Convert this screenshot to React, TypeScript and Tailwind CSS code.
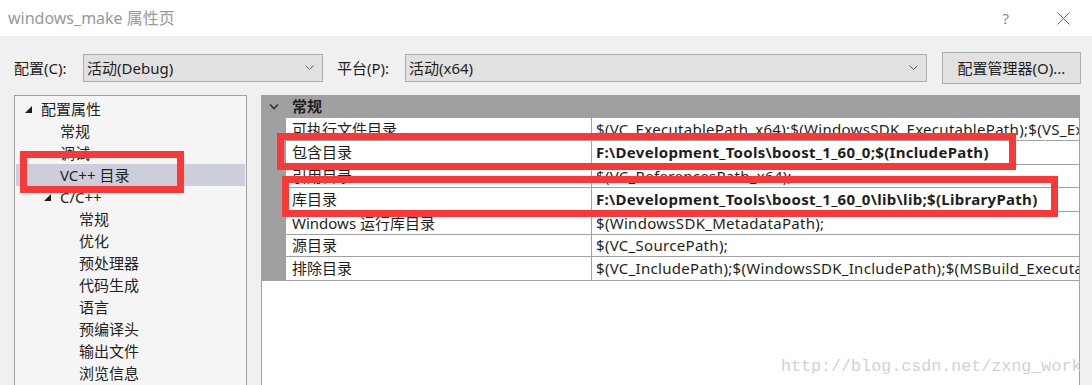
const font = { fontFamily: '"Noto Sans", "Noto Sans CJK SC", sans-serif' };

const tree = [
  { label: "配置属性", indent: "pl-[9px]", arrow: true },
  { label: "常规", indent: "pl-[44px]" },
  { label: "调试", indent: "pl-[44px]" },
  { label: "VC++ 目录", indent: "pl-[44px]", selected: true },
  { label: "C/C++", indent: "pl-[28px]", arrow: true },
  { label: "常规", indent: "pl-[63px]" },
  { label: "优化", indent: "pl-[63px]" },
  { label: "预处理器", indent: "pl-[63px]" },
  { label: "代码生成", indent: "pl-[63px]" },
  { label: "语言", indent: "pl-[63px]" },
  { label: "预编译头", indent: "pl-[63px]" },
  { label: "输出文件", indent: "pl-[63px]" },
  { label: "浏览信息", indent: "pl-[63px]" },
];

const rows = [
  { name: "可执行文件目录", value: "$(VC_ExecutablePath_x64);$(WindowsSDK_ExecutablePath);$(VS_ExecutablePath);$(MSBuild_ExecutablePath)", h: "h-[23px]" },
  { name: "包含目录", value: "F:\\Development_Tools\\boost_1_60_0;$(IncludePath)", bold: true, h: "h-[24px]" },
  { name: "引用目录", value: "$(VC_ReferencesPath_x64);", h: "h-[23px]" },
  { name: "库目录", value: "F:\\Development_Tools\\boost_1_60_0\\lib\\lib;$(LibraryPath)", bold: true, h: "h-[24px]" },
  { name: "Windows 运行库目录", value: "$(WindowsSDK_MetadataPath);", h: "h-[23px]" },
  { name: "源目录", value: "$(VC_SourcePath);", h: "h-[22px]" },
  { name: "排除目录", value: "$(VC_IncludePath);$(WindowsSDK_IncludePath);$(MSBuild_ExecutablePath);$(VC_LibraryPath_x64)", h: "h-[24px]" },
];

const Chevron = () => (
  <svg width="9" height="6" viewBox="0 0 9 6" className="text-[#606060]">
    <polyline points="0.5,0.5 4.5,4.5 8.5,0.5" fill="none" stroke="currentColor" strokeWidth="1" />
  </svg>
);

const Tri = () => (
  <svg width="7" height="7" viewBox="0 0 7 7" className="mr-[9px] shrink-0">
    <polygon points="7,0 7,7 0,7" fill="#1e1e1e" />
  </svg>
);

const App = (): JSX.Element => {
  return (
    <div className="relative w-[1092px] h-[385px] overflow-hidden bg-[#f0f0f0] text-[#1e1e1e]" style={font}>
      {/* title bar */}
      <div className="h-[36px] bg-white flex items-center pl-[8px] pr-[22px]">
        <span className="text-[16px] text-[#999999]">windows_make 属性页</span>
        <span className="ml-auto text-[15px] text-[#8a8a8a]">?</span>
        <svg width="13" height="13" viewBox="0 0 13 13" className="ml-[48px]">
          <path d="M0.5 0.5 L12.5 12.5 M12.5 0.5 L0.5 12.5" stroke="#707070" strokeWidth="1" />
        </svg>
      </div>

      {/* configuration row */}
      <div className="flex items-center h-[32px] mt-[16px] pl-[14px] text-[15px]">
        <span className="w-[69px]">配置(C):</span>
        <div className="w-[240px] h-[28px] bg-[#e1e1e1] border border-[#adadad] flex items-center pl-[3px] pr-[8px]">
          <span>活动(Debug)</span>
          <span className="ml-auto"><Chevron /></span>
        </div>
        <span className="ml-[14px] w-[68px]">平台(P):</span>
        <div className="w-[522px] h-[28px] bg-[#e1e1e1] border border-[#adadad] flex items-center pl-[3px] pr-[8px]">
          <span>活动(x64)</span>
          <span className="ml-auto"><Chevron /></span>
        </div>
        <div className="ml-[15px] w-[139px] h-[32px] bg-[#e1e1e1] border border-[#adadad] flex items-center justify-center">
          配置管理器(O)...
        </div>
      </div>

      {/* panels */}
      <div className="flex mt-[11px] pl-[14px] gap-[14px] h-[300px]">
        <div className="w-[233px] h-full border border-[#a0a0a0] bg-[#f5f5f5] pt-[2px] px-[1px] text-[15px]">
          {tree.map((t, i) => (
            <div
              key={i}
              className={`h-[22px] flex items-center ${t.indent} ${t.selected ? "bg-[#cccedb]" : ""}`}
            >
              {t.arrow && <Tri />}
              <span>{t.label}</span>
            </div>
          ))}
        </div>

        <div className="w-[819px] h-full border-x border-[#a0a0a0] bg-white text-[15px]">
          <div className="h-[23px] bg-[#a0a0a0] flex items-center">
            <span className="w-[24px] flex justify-center">
              <svg width="10" height="6" viewBox="0 0 10 6">
                <polyline points="1,0.5 5,4.5 9,0.5" fill="none" stroke="#333333" strokeWidth="1.6" />
              </svg>
            </span>
            <span className="pl-[6px] font-bold">常规</span>
          </div>
          {rows.map((r, i) => (
            <div key={i} className={`flex ${r.h}`}>
              <div className="w-[24px] bg-[#a0a0a0] shrink-0" />
              <div className="w-[306px] shrink-0 border-r border-b border-[#a0a0a0] flex items-center pl-[6px] whitespace-nowrap">
                {r.name}
              </div>
              <div className={`flex-1 min-w-0 border-b border-[#a0a0a0] flex items-center pl-[4px] whitespace-nowrap overflow-hidden tracking-[0.3px] ${r.bold ? "font-bold" : ""}`}>
                {r.value}
              </div>
            </div>
          ))}
        </div>
      </div>

      {/* red annotation boxes */}
      <div className="absolute left-[20px] top-[151px] w-[164px] h-[42px] border-[7px] border-[#fa3838]" />
      <div className="absolute left-[277px] top-[133px] w-[739px] h-[37px] border-[7px] border-[#fa3838]" />
      <div className="absolute left-[282px] top-[176px] w-[776px] h-[41px] border-[7px] border-[#fa3838]" />

      {/* watermark */}
      <div
        className="absolute left-[781px] top-[354px] text-[16.7px] text-[#d2d2d2]"
        style={{ fontFamily: '"Liberation Mono", monospace' }}
      >
        http://blog.csdn.net/zxng_work
      </div>
    </div>
  );
};

export default App;
